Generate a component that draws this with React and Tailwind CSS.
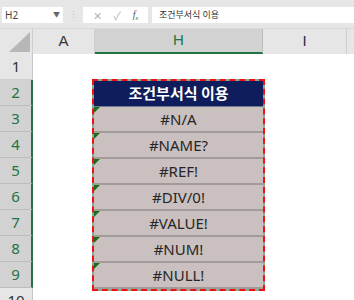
import React from 'react';

const rows = ['#N/A', '#NAME?', '#REF!', '#DIV/0!', '#VALUE!', '#NUM!', '#NULL!'];

const App = () => {
    const rowNums = [1, 2, 3, 4, 5, 6, 7, 8, 9, 10];

    return (
        <div className="w-[354px] h-[300px] overflow-hidden bg-white" style={{ fontFamily: '"Noto Sans", "Noto Sans CJK KR", sans-serif' }}>
            {/* formula bar */}
            <div className="h-[29px] bg-[#e6e6e6] flex items-start pt-[7px] border-b border-[#d8d8d8]">
                <div className="ml-[2px] w-[61px] h-[16px] bg-white flex items-center justify-between px-[3px] text-[10px] text-[#444]">
                    <span>H2</span>
                    <span className="text-[7px] text-[#666]">▼</span>
                </div>
                <div className="w-[20px] h-[16px] flex items-center justify-center text-[9px] text-[#bbb]">⋮</div>
                <div className="w-[65px] h-[16px] bg-white flex items-center justify-around px-[4px]">
                    <span className="text-[11px] text-[#b5b5b5] leading-none">✕</span>
                    <span className="text-[11px] text-[#b5b5b5] leading-none">✓</span>
                    <span className="text-[10px] text-[#555] italic leading-none" style={{ fontFamily: '"Liberation Serif", serif' }}>f<sub className="text-[6px]">x</sub></span>
                </div>
                <div className="ml-[4px] flex-1 h-[16px] bg-white flex items-center pl-[7px] text-[9px] text-[#333]" style={{ fontFamily: '"Noto Sans CJK KR", sans-serif' }}>
                    조건부서식 이용
                </div>
            </div>

            {/* column headers */}
            <div className="h-[25px] flex bg-[#e6e6e6] text-[15px]" style={{ fontFamily: '"Liberation Sans", sans-serif' }}>
                <div className="w-[33px] h-full border-r border-[#cfcfcf] flex items-end justify-end pr-[2px] pb-[2px]">
                    <svg width="21" height="20" viewBox="0 0 21 20">
                        <polygon points="21,0 21,20 0,20" fill="#b7b7b7" />
                    </svg>
                </div>
                <div className="w-[62px] h-full border-r border-[#cfcfcf] flex items-center justify-center text-[#333]">A</div>
                <div className="w-[168px] h-full bg-[#d2d2d2] border-b-2 border-[#217346] border-r border-r-[#bdbdbd] flex items-center justify-center text-[#217346]">H</div>
                <div className="w-[84px] h-full border-r border-[#cfcfcf] flex items-center justify-center text-[#1f2a4a]">I</div>
                <div className="flex-1 h-full"></div>
            </div>

            {/* sheet body */}
            <div className="flex">
                <div className="w-[33px] flex flex-col">
                    {rowNums.map((n) => {
                        const sel = n >= 2 && n <= 9;
                        return (
                            <div
                                key={n}
                                className={
                                    sel
                                        ? 'h-[26px] shrink-0 bg-[#d2d2d2] border-r-2 border-r-[#217346] border-b border-b-[#bdbdbd] flex items-center justify-center text-[15px] text-[#217346]'
                                        : 'h-[26px] shrink-0 bg-[#e6e6e6] border-r border-r-[#c6c6c6] border-b border-b-[#d0d0d0] flex items-center justify-center text-[15px] text-[#333]'
                                }
                            >
                                {n}
                            </div>
                        );
                    })}
                </div>

                <div className="flex-1 bg-white pl-[59px] pt-[25px]">
                    <div className="w-[173px] border-2 border-dashed border-[#f01010] bg-[#8ea79a]">
                        <div className="h-[26px] bg-[#0f1d5c] border-b border-[#6d7a8c] flex items-center justify-center text-white font-bold text-[15px]" style={{ fontFamily: '"Noto Sans CJK KR", sans-serif' }}>
                            조건부서식 이용
                        </div>
                        {rows.map((r, i) => (
                            <div
                                key={i}
                                className="relative h-[26px] bg-[#cac0c0] border-b-2 border-[#a39a9a] flex items-center justify-center text-[15px] text-[#262626]"
                            >
                                <svg className="absolute left-0 top-0" width="6" height="6" viewBox="0 0 6 6">
                                    <polygon points="0,0 6,0 0,6" fill="#1b6e1b" />
                                </svg>
                                {r}
                            </div>
                        ))}
                    </div>
                </div>
            </div>
        </div>
    );
};

export default App;
